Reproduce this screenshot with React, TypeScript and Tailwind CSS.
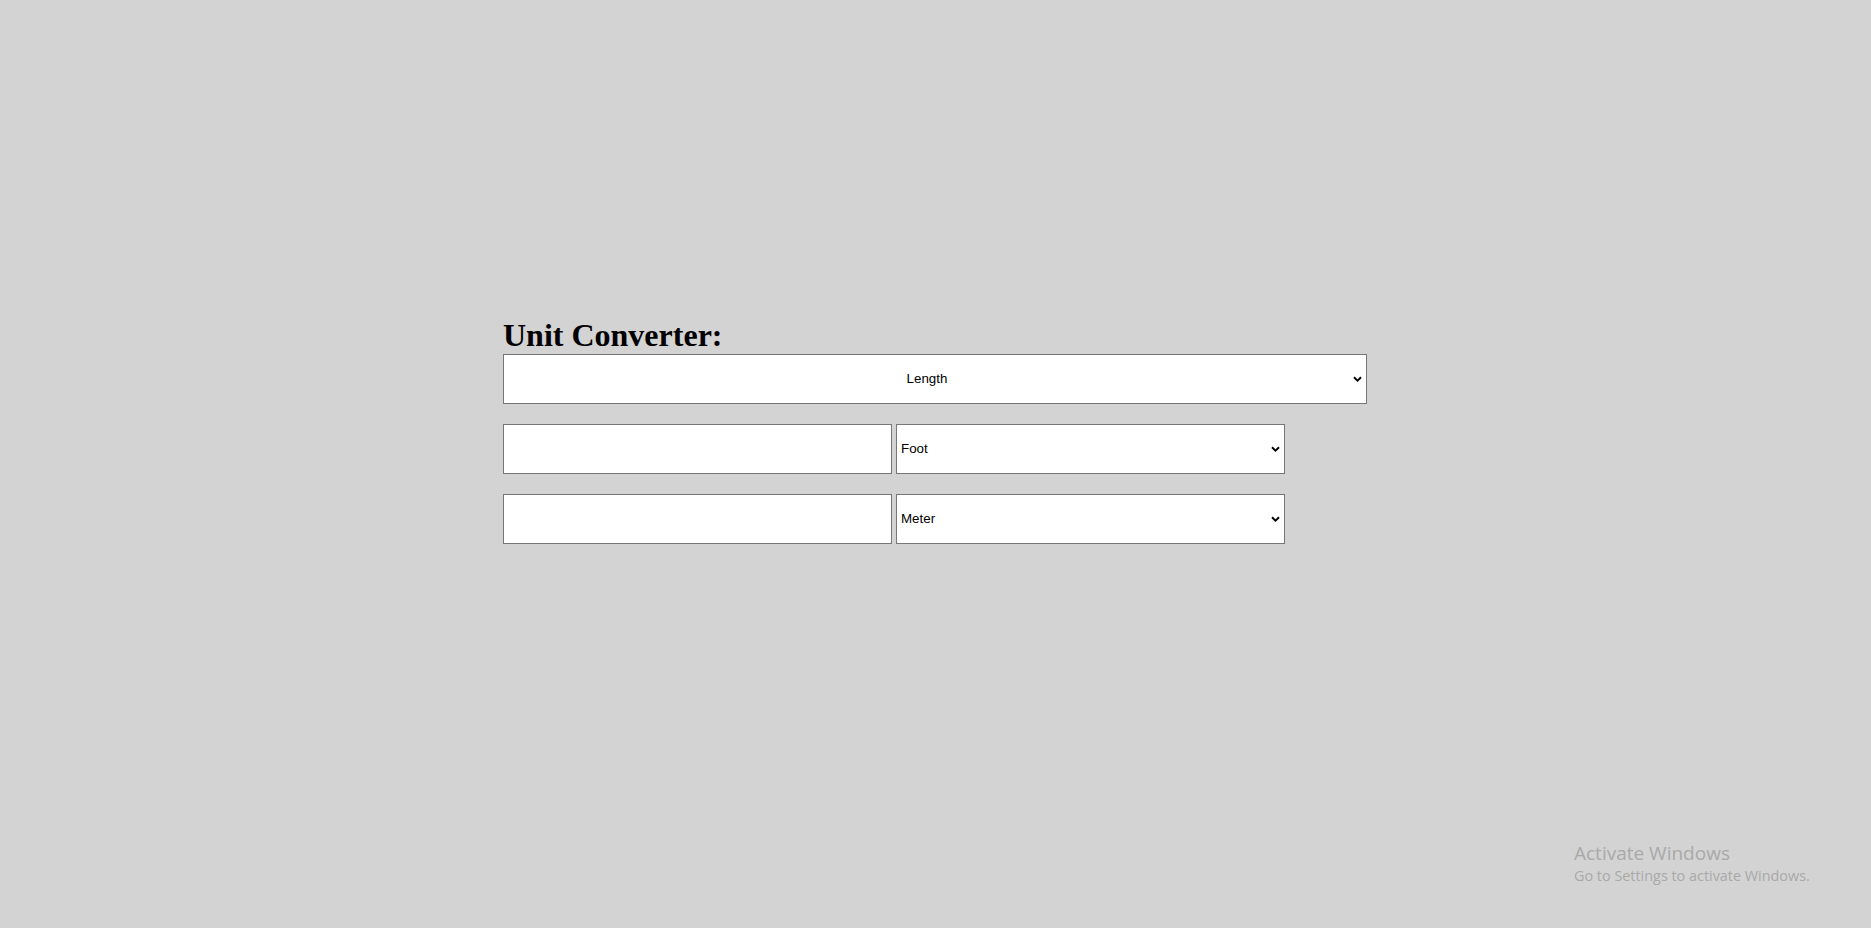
import React from "react";

function Chevron() {
  return (
    <svg
      width="9"
      height="6"
      viewBox="0 0 9 6"
      className="pointer-events-none absolute right-[5px] top-1/2 -translate-y-1/2"
    >
      <path d="M1 1.2 L4.5 4.6 L8 1.2" fill="none" stroke="#000" strokeWidth="1.9" />
    </svg>
  );
}

function Select({
  options,
  value,
  center,
  widthClass,
}: {
  options: string[];
  value: string;
  center?: boolean;
  widthClass: string;
}) {
  return (
    <div className={`relative ${widthClass} h-[50px]`}>
      <select
        defaultValue={value}
        className={`h-full w-full appearance-none border border-[#767676] bg-white pl-[4px] pr-[20px] text-[13.33px] text-black outline-none ${
          center ? "[text-align-last:center]" : ""
        }`}
        style={{ fontFamily: '"Liberation Sans", Arial, sans-serif' }}
      >
        {options.map((o) => (
          <option key={o}>{o}</option>
        ))}
      </select>
      <Chevron />
    </div>
  );
}

export default function App() {
  const units = ["Meter", "Kilometer", "Centimeter", "Millimeter", "Mile", "Yard", "Foot", "Inch"];
  return (
    <div className="relative min-h-screen w-full overflow-hidden bg-[#d3d3d3]">
      <div className="mx-auto w-[865px] pt-[317px]">
        <h1
          className="text-[32px] font-bold leading-[37px] text-black"
          style={{ fontFamily: '"Liberation Serif", "Times New Roman", serif' }}
        >
          Unit Converter:
        </h1>
        <Select options={["Length", "Weight", "Temperature"]} value="Length" center widthClass="w-[864px]" />
        <div className="mt-[20px] flex gap-[4px]">
          <input className="h-[50px] w-[389px] border border-[#767676] bg-white px-[4px] outline-none" />
          <Select options={units} value="Foot" widthClass="w-[389px]" />
        </div>
        <div className="mt-[20px] flex gap-[4px]">
          <input className="h-[50px] w-[389px] border border-[#767676] bg-white px-[4px] outline-none" />
          <Select options={units} value="Meter" widthClass="w-[389px]" />
        </div>
      </div>
      <div
        className="absolute left-[1574px] top-[840px] text-[#a9a9a9]"
        style={{ fontFamily: '"Open Sans", "Noto Sans", sans-serif' }}
      >
        <div className="text-[19px] leading-[26px]">Activate Windows</div>
        <div className="text-[14.4px] leading-[20px]">Go to Settings to activate Windows.</div>
      </div>
    </div>
  );
}
